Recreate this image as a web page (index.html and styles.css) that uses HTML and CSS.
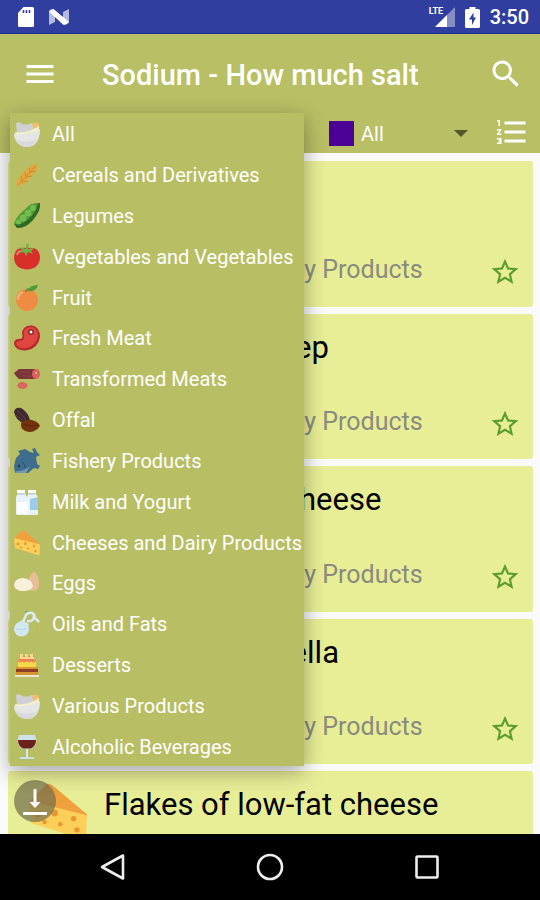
FILE: index.html
```html
<!DOCTYPE html>
<html lang="en">
<head>
    <meta charset="UTF-8">
    <meta name="viewport" content="width=device-width, initial-scale=1.0">
    <title>Sodium - How much salt</title>
    <link rel="stylesheet" href="styles.css">
</head>
<body>
    <!-- Shared icons -->
    <svg class="defs" width="0" height="0" aria-hidden="true">
        <symbol id="bowl" viewBox="0 0 26 26">
            <path d="M2 2 L5 1 L9 3.500 L14 3.500 L18 2 L22 5 L24 12 L3 13 Z" fill="#d0d0d4"/>
            <path d="M18 4 Q20 .5 24 2 Q26 4 25 8 L20 8 Z" fill="#f1bd67"/>
            <path d="M1 11 Q13 13 25 5 L25 11 L2 15 Z" fill="#f4f0cc"/>
            <path d="M0 12.500 Q13 15.500 26 8 C26 20 21 26 13 26 C5 26 0 20 0 12.500 Z" fill="#e6e5e6"/>
            <path d="M2 18 Q12 24 23 18 C20 24 17 26 13 26 C8 26 4 23 2 18 Z" fill="#d9d8da"/>
        </symbol>
        <symbol id="cheese" viewBox="0 0 26 26">
            <path d="M0 8.500 L8 .5 Q9.500 0 11 1.500 L26 14 L26 15 Z" fill="#f0a03c"/>
            <path d="M0 8 L26 14.500 L25.500 25.500 L1 18 Z" fill="#fbcf5a"/>
            <g fill="#e9982f">
                <circle cx="4" cy="14" r="1.400"/>
                <circle cx="11.500" cy="13.500" r="1.500"/>
                <circle cx="20" cy="16" r="1.200"/>
                <circle cx="14" cy="18.500" r="1"/>
                <circle cx="7" cy="17.500" r="1"/>
                <circle cx="21.500" cy="21" r="1.200"/>
            </g>
        </symbol>
        <symbol id="star" viewBox="0 0 24 24">
            <path d="M22 9.240l-7.190-.62L12 2 9.190 8.630 2 9.240l5.460 4.730L5.820 21 12 17.270 18.180 21l-1.630-7.030L22 9.240zM12 15.400l-3.760 2.270 1-4.280-3.320-2.880 4.380-.38L12 6.100l1.710 4.040 4.380.38-3.320 2.880 1 4.280L12 15.400z" fill="#5b9c2d"/>
        </symbol>
    </svg>

    <div class="screen">
        <header class="status-bar">
            <svg width="16" height="20" viewBox="0 0 16 20"><path d="M5.500 0H14.500Q16 0 16 1.500V18.500Q16 20 14.500 20H1.500Q0 20 0 18.500V6Z" fill="#fff"/><path d="M5.500 3v3M8.500 3v3M11.500 3v3" stroke="#303f9f" stroke-width="1.600"/></svg>
            <svg width="22" height="18" viewBox="0 0 22 18"><path d="M1 3L7 7V14L1 17Z M15 4L21 1V15L15 12Z" fill="#b3bade"/><path d="M1 3.500Q2 1 5.500 1L21 14Q19 17 15.500 17Z" fill="#fff"/></svg>
            <div class="status-right">
                <span class="lte">LTE</span>
                <svg width="20" height="20" viewBox="0 0 20 20"><path d="M20 0V20H0Z" fill="#858dc6"/><path d="M12 8V20H0Z" fill="#fff"/></svg>
                <svg width="15" height="21" viewBox="0 0 15 21"><path d="M4.500 0H10.500V2H13.500Q15 2 15 3.500V19.500Q15 21 13.500 21H1.500Q0 21 0 19.500V3.500Q0 2 1.500 2H4.500Z" fill="#fff"/><path d="M8.500 5.500L4 12.500H7V18L11 10.500H8.500Z" fill="#303f9f"/></svg>
                <span class="clock">3:50</span>
            </div>
        </header>

        <div class="app-bar">
            <div class="toolbar">
                <button class="icon-btn" aria-label="Menu">
                    <svg width="36" height="36" viewBox="0 0 24 24"><path d="M3 18h18v-2H3v2zm0-5h18v-2H3v2zm0-7v2h18V6H3z" fill="#fff"/></svg>
                </button>
                <h1>Sodium - How much salt</h1>
                <button class="icon-btn" aria-label="Search">
                    <svg width="36" height="36" viewBox="0 0 24 24"><path d="M15.500 14h-.79l-.28-.27C15.410 12.590 16 11.110 16 9.500 16 5.910 13.090 3 9.500 3S3 5.910 3 9.500 5.910 16 9.500 16c1.610 0 3.090-.59 4.230-1.570l.27.28v.79l5 4.990L20.490 19l-4.990-5zm-6 0C7.010 14 5 11.990 5 9.500S7.010 5 9.500 5 14 7.010 14 9.500 11.990 14 9.500 14z" fill="#fff"/></svg>
                </button>
            </div>
            <div class="filters">
                <div class="level">
                    <span class="swatch"></span>
                    <select id="level" aria-label="Salt level">
                        <option>All</option>
                    </select>
                    <svg class="caret" width="14" height="7" viewBox="0 0 14 7"><path d="M0 0H14L7 7Z" fill="#55582b"/></svg>
                </div>
                <button class="icon-btn sort" aria-label="Sort">
                    <svg width="36" height="36" viewBox="0 0 24 24"><path d="M2 17h2v.5H3v1h1v.5H2v1h3v-4H2v1zm1-9h1V4H2v1h1v3zm-1 3h1.800L2 13.100v.9h3v-1H3.200L5 10.900V10H2v1zm5-6v2h14V5H7zm0 14h14v-2H7v2zm0-6h14v-2H7v2z" fill="#fff"/></svg>
                </button>
            </div>
        </div>

        <main class="foods">
            <article class="card">
                <svg class="thumb" width="58" height="58"><use href="#cheese"/></svg>
                <div class="info">
                    <h2>Feta</h2>
                    <div class="foot">
                        <p>Cheeses and Dairy Products</p>
                        <button class="fav" aria-label="Add to favorites"><svg width="32" height="32"><use href="#star"/></svg></button>
                    </div>
                </div>
            </article>
            <article class="card">
                <svg class="thumb" width="58" height="58"><use href="#cheese"/></svg>
                <div class="info">
                    <h2>Ricotta of sheep</h2>
                    <div class="foot">
                        <p>Cheeses and Dairy Products</p>
                        <button class="fav" aria-label="Add to favorites"><svg width="32" height="32"><use href="#star"/></svg></button>
                    </div>
                </div>
            </article>
            <article class="card">
                <svg class="thumb" width="58" height="58"><use href="#cheese"/></svg>
                <div class="info">
                    <h2>Fresh cream cheese</h2>
                    <div class="foot">
                        <p>Cheeses and Dairy Products</p>
                        <button class="fav" aria-label="Add to favorites"><svg width="32" height="32"><use href="#star"/></svg></button>
                    </div>
                </div>
            </article>
            <article class="card">
                <svg class="thumb" width="58" height="58"><use href="#cheese"/></svg>
                <div class="info">
                    <h2>Fresh mozzarella</h2>
                    <div class="foot">
                        <p>Cheeses and Dairy Products</p>
                        <button class="fav" aria-label="Add to favorites"><svg width="32" height="32"><use href="#star"/></svg></button>
                    </div>
                </div>
            </article>
            <article class="card card-cut">
                <svg class="thumb" width="58" height="58"><use href="#cheese"/></svg>
                <div class="info">
                    <h2>Flakes of low-fat cheese</h2>
                </div>
                <button class="download" aria-label="Download">
                    <svg width="24" height="27" viewBox="0 0 24 27"><path d="M10.500 1h3v13h4L12 20 6.500 14h4zM0 24h24v3H0z" fill="#fff"/></svg>
                </button>
            </article>
        </main>

        <nav class="nav-bar">
            <button aria-label="Back"><svg width="28" height="28" viewBox="0 0 28 28"><path d="M24 2.500V25.500L3 14Z" fill="none" stroke="#eee" stroke-width="2.600" stroke-linejoin="round"/></svg></button>
            <button aria-label="Home"><svg width="28" height="28" viewBox="0 0 28 28"><circle cx="14" cy="14" r="12" fill="none" stroke="#eee" stroke-width="2.600"/></svg></button>
            <button aria-label="Recents"><svg width="28" height="28" viewBox="0 0 28 28"><rect x="3.500" y="3.500" width="21" height="21" rx="1" fill="none" stroke="#eee" stroke-width="2.600"/></svg></button>
        </nav>

        <!-- Category popup -->
        <ul class="menu">
            <li><button><svg width="26" height="26"><use href="#bowl"/></svg>All</button></li>
            <li><button><svg width="26" height="26" viewBox="0 0 26 26"><path d="M2 22L6 14L17 4L24 1L23 8L12 20L4 25Z" fill="#e5a63c"/><path d="M4 23L22 4M7 14l1 6 6-1M11 10l1 5 6-1M15 6l1 4 6-1" stroke="#c98f34" stroke-width="1" fill="none"/></svg>Cereals and Derivatives</button></li>
            <li><button><svg width="26" height="26" viewBox="0 0 26 26"><path d="M18 1L26 0Q27 8 19 17Q11 26 3 25L0 21Q8 20 13 11Z" fill="#2e6a24"/><path d="M17 1L24 1Q21 12 12 18Q5 23 0 21Q2 14 9 8Z" fill="#4d9a39"/><circle cx="19" cy="5" r="3" fill="#74bb4c"/><circle cx="14" cy="10" r="3.500" fill="#74bb4c"/><circle cx="9" cy="15" r="3.500" fill="#74bb4c"/><circle cx="4.500" cy="19" r="2.500" fill="#74bb4c"/></svg>Legumes</button></li>
            <li><button><svg width="26" height="26" viewBox="0 0 26 26"><path d="M13 4Q26 2 26 14Q25 25 13 25.500Q1 25 0 14Q0 2 13 4Z" fill="#d92f2b"/><path d="M3 11Q4 7 7 7" stroke="#ef7b71" stroke-width="2" fill="none"/><path d="M12 5L12 0L15 0L14 5L20 4L17 7L19 10L14 8L12 12L10 8L5 9L8 6L5 3Z" fill="#6fb344"/></svg>Vegetables and Vegetables</button></li>
            <li><button><svg width="26" height="26" viewBox="0 0 26 26"><circle cx="13" cy="15" r="11" fill="#f08b43"/><path d="M4 15Q4 9 9 7" stroke="#f8b27a" stroke-width="2" fill="none"/><path d="M14 6Q15 0 24 0Q22 7 14 6Z" fill="#4e9a37"/><path d="M12 7Q12 4 15 4" stroke="#6b8432" stroke-width="1.500" fill="none"/></svg>Fruit</button></li>
            <li><button><svg width="26" height="26" viewBox="0 0 26 26"><path d="M8 8Q9 0 18 .5Q26 2 26 12Q24 24 12 25.500Q2 26 0 19Q0 14 5 14Q10 14 8 8Z" fill="#b52a2b"/><path d="M9.500 8Q10 2 18 2Q24 4 24 11Q22 21 12 23Q4 24 2 19Q2 16 6 16Q12 15 9.500 8Z" fill="#e0453f"/><circle cx="17" cy="7" r="3" fill="#8b2328"/><circle cx="17" cy="7" r="1.500" fill="#fff"/></svg>Fresh Meat</button></li>
            <li><button><svg width="26" height="26" viewBox="0 0 26 26"><path d="M0 7L5 3H21V13H5L2 10Z" fill="#7a3636"/><path d="M7 6h9M9 10h8" stroke="#8c4240" stroke-width="1.200"/><ellipse cx="22" cy="8" rx="4" ry="5" fill="#d9635c"/><circle cx="22" cy="7" r="1" fill="#f3b5a8"/><ellipse cx="8.500" cy="19.500" rx="5" ry="3.500" fill="#d9635c"/><path d="M6 19h1M10 18h1M8 21h1" stroke="#e58d84" stroke-width="1.200"/></svg>Transformed Meats</button></li>
            <li><button><svg width="26" height="26" viewBox="0 0 26 26"><path d="M0 5Q1 0 7 1Q14 5 16 13L10 16Q2 14 0 5Z" fill="#412a2e"/><path d="M3 4Q9 7 12 14M1 8Q6 10 9 14" stroke="#5c4044" stroke-width="1" fill="none"/><path d="M7 16Q11 12 18 13Q25 15 26 19Q22 25 15 25Q6 24 7 16Z" fill="#74330f"/><path d="M9 17Q17 20 24 18" stroke="#5c280d" stroke-width="1.300" fill="none"/></svg>Offal</button></li>
            <li><button><svg width="26" height="26" viewBox="0 0 26 26"><path d="M2 10L6 6L4 3L11 1L16 4L20 5L18 1L21 0L23 4L26 7L22 9L23 16L26 18L24 21L20 20L14 25H1L0 18Z" fill="#3f6d8d"/><path d="M2 23Q9 24 16 18L12 25H1Z" fill="#7597ab"/><circle cx="5" cy="18" r="1.200" fill="#1e3a4e"/><path d="M8 14q3 2 3 6" stroke="#28516e" fill="none"/></svg>Fishery Products</button></li>
            <li><button><svg width="26" height="26" viewBox="0 0 26 26"><path d="M2 8L4 4H11L13 8L15 4H21L24 8V25Q24 26 22 26H3Q2 26 2 24Z" fill="#e9f2f8"/><path d="M3 1H11V4H3ZM14 1H22V4H14Z" fill="#fff"/><path d="M4 5H11M15 5H21" stroke="#9bbdd1" stroke-width="1"/><path d="M16 10L24 8V21H16Z" fill="#9ccbe8"/><path d="M3 13H14V25H3Z" fill="#fff"/></svg>Milk and Yogurt</button></li>
            <li><button><svg width="26" height="26"><use href="#cheese"/></svg>Cheeses and Dairy Products</button></li>
            <li><button><svg width="26" height="26" viewBox="0 0 26 26"><path d="M14 12Q16 2 21 2Q26 8 25 16Q24 21 19 21Q14 20 14 12Z" fill="#e6bd95"/><path d="M0 15Q1 8 9 8Q18 9 19 16Q18 21 9 21Q1 21 0 15Z" fill="#f9f0dc"/></svg>Eggs</button></li>
            <li><button><svg width="26" height="26" viewBox="0 0 26 26"><path d="M9 11L12 4Q14 1 18 2Q21 3 20 7Q18 11 13 10" fill="none" stroke="#dcebf2" stroke-width="2.500"/><path d="M19 5L25 11" stroke="#dcebf2" stroke-width="2.500"/><path d="M7 9L15 13L13 18H4Z" fill="#dcebf2"/><circle cx="7.500" cy="18" r="7.500" fill="#d1e7f2"/><path d="M2 18Q8 20 13 17" stroke="#bcd8e5" fill="none"/><path d="M25.500 12V23" stroke="#c9c240" stroke-width="1.500"/><path d="M11 1l3-1" stroke="#55b7a5" stroke-width="1.500"/></svg>Oils and Fats</button></li>
            <li><button><svg width="26" height="26" viewBox="0 0 26 26"><path d="M6 4H20V10H6Z" fill="#ef7656"/><path d="M6 2h3v3H6zM11 2h3v3h-3zM16 2h3v3h-3z" fill="#f8dc8b"/><path d="M6 5h14v2H6z" fill="#f8dc8b"/><path d="M4 9H22V16H4Z" fill="#f7d94c"/><path d="M4 9q2 3 4 0q2 3 5 0q2 3 4 0q2 3 5 0V8H4Z" fill="#ee8453"/><path d="M2 15H24V23H2Z" fill="#d9952f"/><path d="M2 17H24V20H2Z" fill="#8d3d26"/><path d="M1 23H25V25H1Z" fill="#eae6d6"/></svg>Desserts</button></li>
            <li><button><svg width="26" height="26"><use href="#bowl"/></svg>Various Products</button></li>
            <li><button><svg width="26" height="26" viewBox="0 0 26 26"><path d="M5 1H21Q25 11 17 15H9Q1 11 5 1Z" fill="#cfe2e8"/><path d="M4 6H22Q22 12 17 14.500H9Q4 12 4 6Z" fill="#6a201b"/><path d="M13 15V23" stroke="#d6e7ec" stroke-width="2"/><path d="M6 23H20V25H6Z" fill="#c5e0ec"/></svg>Alcoholic Beverages</button></li>
        </ul>
    </div>
</body>
</html>
```
FILE: styles.css
```css
* {
    box-sizing: border-box;
}
body {
    margin: 0;
    font-family: Roboto, "Liberation Sans", sans-serif;
    color: #000;
}
h1, h2, p, ul {
    margin: 0;
    padding: 0;
}
button {
    padding: 0;
    border: none;
    background: none;
    font-family: inherit;
    color: inherit;
    cursor: pointer;
}
svg {
    display: block;
    flex: none;
}
.defs {
    position: absolute;
}
.screen {
    position: relative;
    display: flex;
    flex-direction: column;
    height: 100vh;
    min-height: 800px;
    overflow: hidden;
    background: #fafafa;
}

/* Status bar */
.status-bar {
    display: flex;
    align-items: center;
    gap: 14px;
    height: 34px;
    padding: 1px 11px 0 18px;
    background: #303f9f;
    border-bottom: 1px solid #1b2d8e;
    color: #fff;
}
.status-right {
    display: flex;
    align-items: center;
    gap: 10px;
    margin-left: auto;
    position: relative;
}
.lte {
    position: absolute;
    left: -6px;
    top: 1px;
    font-size: 9px;
    line-height: 10px;
    font-weight: 700;
}
.clock {
    font-size: 20px;
    line-height: 24px;
    font-weight: 500;
}

/* App bar */
.app-bar {
    background: #b8bf64;
    color: #fff;
}
.toolbar {
    display: flex;
    align-items: center;
    height: 80px;
    padding: 0 16px 0 22px;
}
.toolbar h1 {
    flex: 1;
    margin-left: 44px;
    padding-top: 2px;
    font-size: 29px;
    line-height: 36px;
    font-weight: 500;
    white-space: nowrap;
}
.filters {
    display: flex;
    justify-content: flex-end;
    height: 39px;
    padding-right: 10px;
}
.level {
    display: flex;
    align-items: center;
    position: relative;
    width: 139px;
    margin-right: 26px;
}
.swatch {
    width: 25px;
    height: 25px;
    background: #4b0096;
}
.level select {
    flex: 1;
    padding: 0 0 0 7px;
    border: none;
    appearance: none;
    background: none;
    color: #fff;
    font-family: inherit;
    font-size: 20px;
    line-height: 26px;
}
.caret {
    position: absolute;
    right: 0;
    pointer-events: none;
}
.sort {
    align-self: flex-start;
}

/* Food list */
.foods {
    flex: 1;
    min-height: 0;
    display: flex;
    flex-direction: column;
    gap: 7px;
    padding: 8px 7px 0 8px;
}
.card {
    flex: 1;
    position: relative;
    display: grid;
    grid-template-columns: 74px 1fr;
    column-gap: 22px;
    border-radius: 3px;
    background: #e8ee96;
    overflow: hidden;
}
.card-cut {
    flex: 0 0 63px;
    border-radius: 3px 3px 0 0;
}
.thumb {
    margin: 12px 0 0 21px;
}
.info {
    display: flex;
    flex-direction: column;
    justify-content: space-between;
    padding: 17px 12px 19px 0;
}
.info h2 {
    font-size: 31px;
    line-height: 34px;
    font-weight: 400;
    white-space: nowrap;
}
.foot {
    display: flex;
    align-items: flex-start;
    justify-content: space-between;
}
.foot p {
    padding-left: 6px;
    font-size: 25px;
    line-height: 28px;
    color: #8a8a80;
    white-space: nowrap;
}
.download {
    position: absolute;
    left: 6px;
    top: 9px;
    display: flex;
    align-items: center;
    justify-content: center;
    width: 42px;
    height: 42px;
    border-radius: 50%;
    background: rgba(112, 110, 76, 0.7);
}

/* Navigation bar */
.nav-bar {
    display: flex;
    align-items: center;
    justify-content: center;
    gap: 129px;
    height: 66px;
    background: #000;
}

/* Category popup */
.menu {
    position: absolute;
    top: 113px;
    bottom: 134px;
    left: 10px;
    width: 294px;
    display: flex;
    flex-direction: column;
    list-style: none;
    background: #b8be63;
    color: #fff;
    box-shadow: 0 6px 20px rgba(0, 0, 0, 0.35);
}
.menu li {
    flex: 1;
    display: flex;
}
.menu button {
    flex: 1;
    display: flex;
    align-items: center;
    gap: 12px;
    padding: 2px 0 0 4px;
    font-size: 20px;
    line-height: 26px;
    white-space: nowrap;
}
```
